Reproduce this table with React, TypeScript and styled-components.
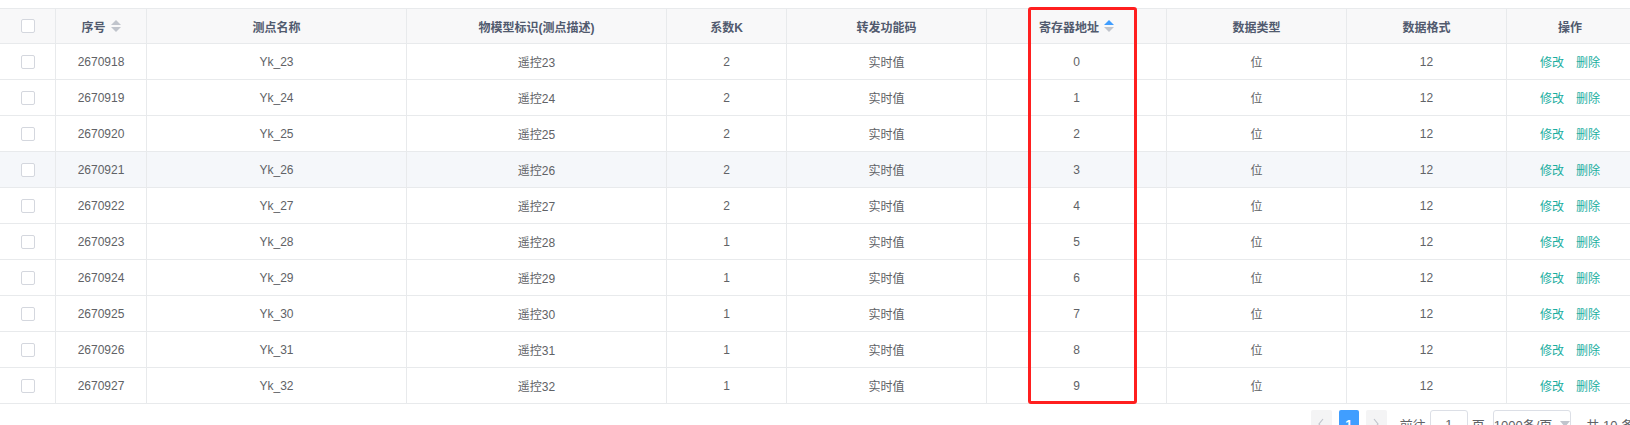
import { FC } from 'react'
import styled, { createGlobalStyle } from 'styled-components'

const GlobalStyle = createGlobalStyle`
  body {
    margin: 0;
    background: #ffffff;
    overflow: hidden;
    font-family: 'Liberation Sans', 'Noto Sans CJK SC', sans-serif;
  }
`

const Page = styled.div`
  position: relative;
  width: 1634px;
  padding-top: 8px;
`

const Table = styled.table`
  width: 1634px;
  table-layout: fixed;
  border-collapse: separate;
  border-spacing: 0;
  border-top: 1px solid #e8eaec;
  font-size: 12px;
`

const HeadCell = styled.th`
  height: 34px;
  padding: 0;
  background: #f8f8f9;
  color: #515a6e;
  font-weight: bold;
  text-align: center;
  border-right: 1px solid #e8eaec;
  border-bottom: 1px solid #e8eaec;
  white-space: nowrap;
`

const Row = styled.tr<{ $hover?: boolean }>`
  background: ${(p) => (p.$hover ? '#f5f7fa' : '#ffffff')};
`

const Cell = styled.td`
  height: 35px;
  padding: 0;
  color: #606266;
  text-align: center;
  border-right: 1px solid #e8eaec;
  border-bottom: 1px solid #e8eaec;
  white-space: nowrap;
`

const CheckBox = styled.span`
  display: inline-block;
  box-sizing: border-box;
  width: 14px;
  height: 14px;
  border: 1px solid #d4d7de;
  border-radius: 2px;
  background: #ffffff;
  vertical-align: middle;
`

const HeadLabel = styled.span`
  display: inline-flex;
  align-items: center;
  gap: 5px;
`

const Caret = styled.span`
  display: inline-flex;
  flex-direction: column;
  gap: 2px;
`

const Triangle = styled.i<{ $up?: boolean; $active?: boolean }>`
  display: block;
  width: 0;
  height: 0;
  border-left: 5px solid transparent;
  border-right: 5px solid transparent;
  ${(p) =>
    p.$up
      ? `border-bottom: 5px solid ${p.$active ? '#409eff' : '#c0c4cc'};`
      : `border-top: 5px solid ${p.$active ? '#409eff' : '#c0c4cc'};`}
`

const Link = styled.a`
  color: #1aae9f;
  cursor: pointer;
  & + & {
    margin-left: 12px;
  }
`

// red annotation frame drawn over the register column
const Highlight = styled.div`
  position: absolute;
  left: 1028px;
  top: 7px;
  width: 109px;
  height: 397px;
  box-sizing: border-box;
  border: 3px solid #ff1f1f;
  border-radius: 3px;
  pointer-events: none;
`

const Pager = styled.div`
  display: flex;
  align-items: center;
  padding: 6px 0 0 1311px;
  font-size: 13px;
  color: #606266;
  white-space: nowrap;
`

const PageBtn = styled.span<{ $active?: boolean }>`
  display: inline-flex;
  align-items: center;
  justify-content: center;
  width: 25px;
  height: 28px;
  margin-right: 7px;
  border-radius: 2px;
  background: ${(p) => (p.$active ? '#409eff' : '#f4f4f5')};
  color: ${(p) => (p.$active ? '#ffffff' : '#c0c4cc')};
  font-weight: bold;
`

const Jumper = styled.span`
  display: inline-flex;
  align-items: center;
  margin-left: 6px;
`

const Input = styled.span<{ $w: number }>`
  display: inline-flex;
  align-items: center;
  justify-content: center;
  box-sizing: border-box;
  width: ${(p) => p.$w}px;
  height: 28px;
  margin: 0 4px;
  border: 1px solid #dcdfe6;
  border-radius: 3px;
  color: #606266;
  gap: 8px;
`

const SizeSelect = styled(Input)`
  margin-left: 8px;
`

const Total = styled.span`
  margin-left: 11px;
`

const cols = [56, 91, 260, 260, 120, 200, 180, 180, 160, 127]

const rows = Array.from({ length: 10 }, (_, i) => ({
  id: 2670918 + i,
  name: `Yk_${23 + i}`,
  desc: `遥控${23 + i}`,
  k: i < 5 ? 2 : 1,
  addr: i,
}))

const Sort: FC<{ active?: boolean }> = ({ active }) => (
  <Caret>
    <Triangle $up $active={active} />
    <Triangle />
  </Caret>
)

const Arrow: FC<{ dir: 'left' | 'right' | 'down' }> = ({ dir }) => {
  if (dir === 'down')
    return (
      <svg width='10' height='6' viewBox='0 0 10 6'>
        <path d='M0 0 L10 0 L5 6 Z' fill='#c0c4cc' />
      </svg>
    )
  const d = dir === 'left' ? 'M6 1 L2 6 L6 11' : 'M2 1 L6 6 L2 11'
  return (
    <svg width='8' height='12' viewBox='0 0 8 12'>
      <path d={d} fill='none' stroke='#c0c4cc' strokeWidth='1.2' />
    </svg>
  )
}

const App: FC = () => {
  return (
    <>
      <GlobalStyle />
      <Page>
        <Table>
          <colgroup>
            {cols.map((w, i) => (
              <col key={i} style={{ width: w }} />
            ))}
          </colgroup>
          <thead>
            <tr>
              <HeadCell>
                <CheckBox />
              </HeadCell>
              <HeadCell>
                <HeadLabel>
                  序号
                  <Sort />
                </HeadLabel>
              </HeadCell>
              <HeadCell>测点名称</HeadCell>
              <HeadCell>物模型标识(测点描述)</HeadCell>
              <HeadCell>系数K</HeadCell>
              <HeadCell>转发功能码</HeadCell>
              <HeadCell>
                <HeadLabel>
                  寄存器地址
                  <Sort active />
                </HeadLabel>
              </HeadCell>
              <HeadCell>数据类型</HeadCell>
              <HeadCell>数据格式</HeadCell>
              <HeadCell>操作</HeadCell>
            </tr>
          </thead>
          <tbody>
            {rows.map((r, i) => (
              <Row key={r.id} $hover={i === 3}>
                <Cell>
                  <CheckBox />
                </Cell>
                <Cell>{r.id}</Cell>
                <Cell>{r.name}</Cell>
                <Cell>{r.desc}</Cell>
                <Cell>{r.k}</Cell>
                <Cell>实时值</Cell>
                <Cell>{r.addr}</Cell>
                <Cell>位</Cell>
                <Cell>12</Cell>
                <Cell>
                  <Link>修改</Link>
                  <Link>删除</Link>
                </Cell>
              </Row>
            ))}
          </tbody>
        </Table>
        <Pager>
          <PageBtn>
            <Arrow dir='left' />
          </PageBtn>
          <PageBtn $active>1</PageBtn>
          <PageBtn>
            <Arrow dir='right' />
          </PageBtn>
          <Jumper>
            前往
            <Input $w={38}>1</Input>页
          </Jumper>
          <SizeSelect $w={82}>
            1000条/页
            <Arrow dir='down' />
          </SizeSelect>
          <Total>共 10 条</Total>
        </Pager>
        <Highlight />
      </Page>
    </>
  )
}

export default App
